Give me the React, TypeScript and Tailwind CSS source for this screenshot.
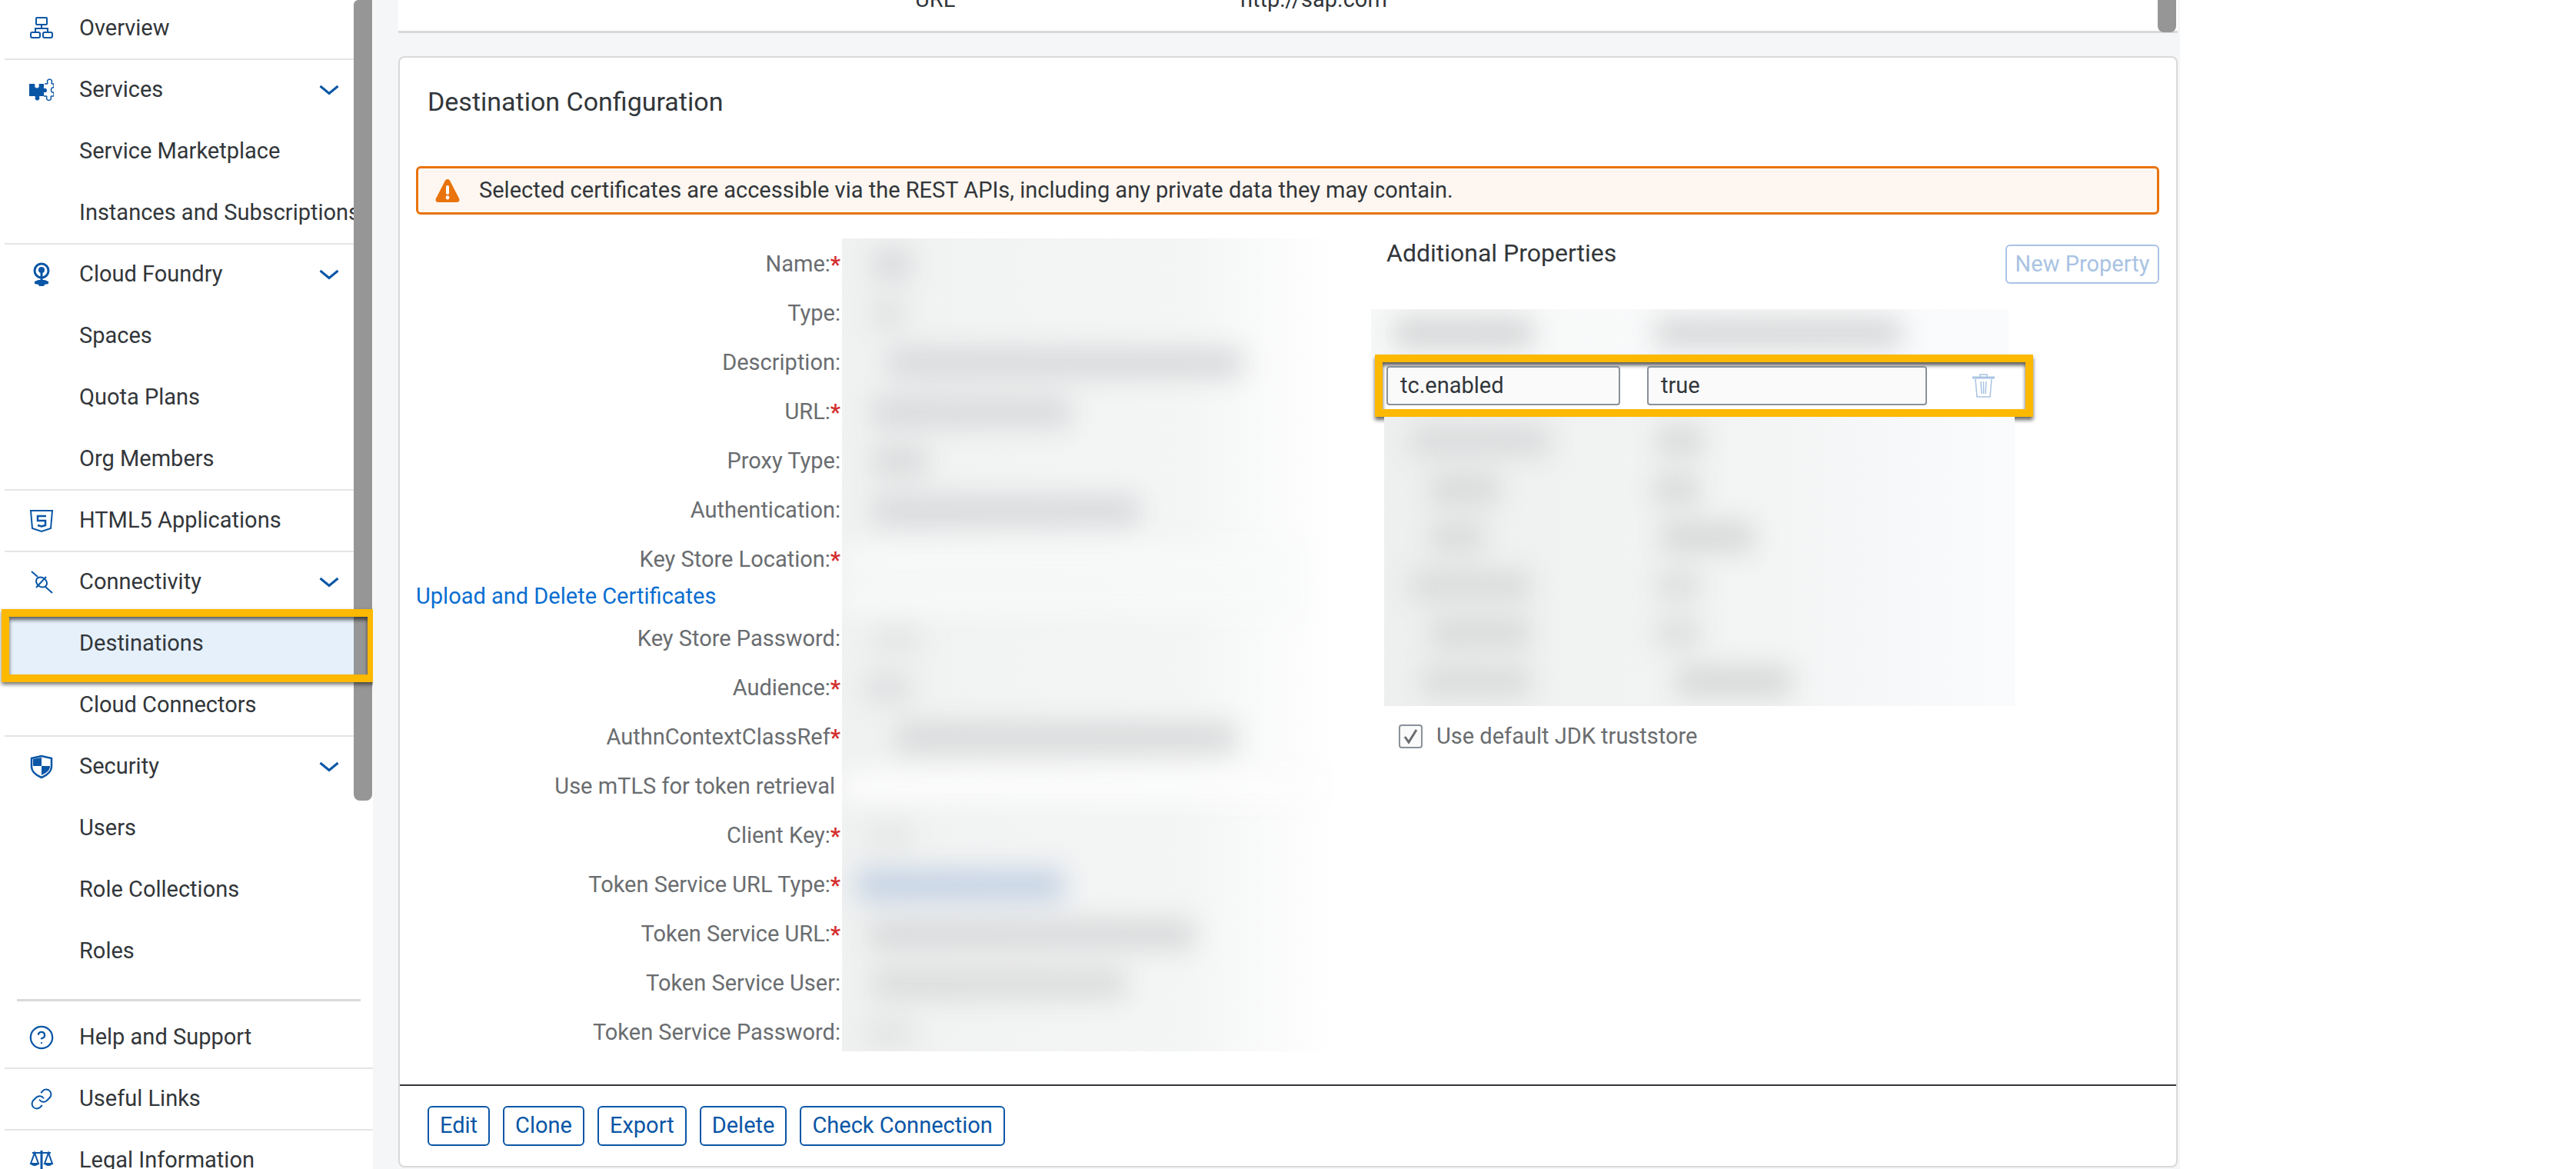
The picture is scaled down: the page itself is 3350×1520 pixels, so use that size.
import { CircleHelp, Link } from "lucide-react";
import type { ReactNode } from "react";

const ICON = "#0a56a6";

function Svg({ children }: { children: ReactNode }) {
  return (
    <svg className="h-[32px] w-[32px] shrink-0" viewBox="0 0 32 32" fill="none" stroke={ICON} strokeWidth="2">
      {children}
    </svg>
  );
}

const icons: Record<string, ReactNode> = {
  overview: (
    <Svg>
      <rect x="9" y="2" width="14" height="9" rx="1" />
      <path d="M16 11v5M8 21v-5h16v5" />
      <rect x="2" y="21" width="12" height="7" rx="2" />
      <rect x="18" y="21" width="12" height="7" rx="2" />
    </Svg>
  ),
  services: (
    <Svg>
      <path fill={ICON} stroke="none" d="M0 8h6.500c1 0 1.200 1 .8 2-.6 2 1 3.500 2.700 3.500S13.300 12 12.700 10c-.4-1-.2-2 .8-2H19v6.200c1.500-1 4-.3 4 2.300s-2.500 3.300-4 2.300V24h-5c-1 0-1.200 1-.8 1.800.8 2-.8 3.700-2.700 3.700s-3.500-1.700-2.700-3.700C8.200 25 8 24 7 24H0z" />
      <path strokeWidth="1.500" d="M20 8h3c1 0 1-1 .7-2-.7-2 .8-4 2.800-4s3.500 2 2.800 4c-.3 1-.3 2 .7 2h2v5c-1.500-1-3.500.5-3.500 3s2 4 3.500 3v5h-3c-1 0-1 1-.7 1.800.7 2-.8 3.700-2.800 3.700s-3.500-1.700-2.800-3.700c.3-.8.300-1.800-.7-1.800h-3" />
    </Svg>
  ),
  cloud: (
    <Svg>
      <circle cx="16" cy="11" r="9" strokeWidth="3" />
      <circle cx="16" cy="10" r="4" fill={ICON} stroke="none" />
      <path strokeWidth="3" d="M16 12v12" />
      <path fill={ICON} stroke="none" d="M7 25l5-2h8l5 2v3l-5 1-1 2h-6l-1-2-5-1z" />
    </Svg>
  ),
  html: (
    <Svg>
      <path d="M2 3h28l-2 23-12 4-12-4z" />
      <path strokeWidth="2.500" d="M22 10H11v6h10v6l-5 1.500L11 22" />
    </Svg>
  ),
  connect: (
    <Svg>
      <path d="M3 2l8 7M21 22l9 8" />
      <ellipse cx="16" cy="16" rx="7.500" ry="6" transform="rotate(38 16 16)" />
      <path d="M9 23L22 9" />
    </Svg>
  ),
  security: (
    <Svg>
      <path strokeWidth="2.500" d="M3 5l13-3 13 3v11c0 7-6 11-13 14C9 27 3 23 3 16z" />
      <path fill={ICON} stroke="none" d="M5 6l11-2v11H5zM16 15h11c0 6-5 9-11 12z" />
    </Svg>
  ),
  help: <CircleHelp size={34} color={ICON} strokeWidth={1.6} className="shrink-0" />,
  links: <Link size={30} color={ICON} strokeWidth={1.6} className="shrink-0" />,
  legal: (
    <Svg>
      <path strokeWidth="3" d="M16 3v28" />
      <path d="M4 6h24M7 6L2 20h10zM25 6l-5 14h10z" />
      <path fill={ICON} stroke="none" d="M2 20h10a5 3 0 0 1-10 0zM20 20h10a5 3 0 0 1-10 0z" />
    </Svg>
  ),
};

function Chevron() {
  return (
    <svg className="ml-auto mr-[19px] shrink-0" width="26" height="14" viewBox="0 0 26 14" fill="none" stroke={ICON} strokeWidth="3">
      <path d="M1.500 2L13 11.500 24.500 2" />
    </svg>
  );
}

function Row({ label, icon, chevron, divider }: { label: string; icon?: string; chevron?: boolean; divider?: boolean }) {
  return (
    <div className={`flex h-[80px] items-center border-b-2 ${divider ? "border-[#e5e5e5]" : "border-transparent"} ${icon ? "pl-[32px]" : "pl-[97px]"}`}>
      {icon && <span className="mr-[33px] flex w-[32px] shrink-0 justify-center">{icons[icon]}</span>}
      <span className="whitespace-nowrap">{label}</span>
      {chevron && <Chevron />}
    </div>
  );
}

function Sidebar() {
  return (
    <aside className="h-[1520px] w-[485px] shrink-0 overflow-hidden bg-white pl-[6px] text-[29px] text-[#32363a]">
      <div className="-mt-[2px] flex">
        <nav className="w-[454px] shrink-0">
          <Row label="Overview" icon="overview" divider />
          <Row label="Services" icon="services" chevron />
          <Row label="Service Marketplace" />
          <Row label="Instances and Subscriptions" divider />
          <Row label="Cloud Foundry" icon="cloud" chevron />
          <Row label="Spaces" />
          <Row label="Quota Plans" />
          <Row label="Org Members" divider />
          <Row label="HTML5 Applications" icon="html" divider />
          <Row label="Connectivity" icon="connect" chevron />
          <div className="relative bg-[#e5f0fa]">
            <Row label="Destinations" />
            <div className="absolute -bottom-[9px] -left-[4px] -right-[28px] -top-[6px] z-10 border-[10px] border-[#fdb800] shadow-[0_3px_5px_rgba(0,0,0,0.55),inset_0_4px_5px_rgba(0,0,0,0.6)]" />
          </div>
          <Row label="Cloud Connectors" divider />
          <Row label="Security" icon="security" chevron />
          <Row label="Users" />
          <Row label="Role Collections" />
          <Row label="Roles" />
        </nav>
        <div className="mt-[2px] h-[1041px] w-[24px] shrink-0 rounded-b-[8px] rounded-tl-[6px] bg-[#969696]" />
      </div>
      <div className="ml-[16px] mr-[16px] mt-[21px] h-[3px] bg-[#d9d9d9]" />
      <div className="mt-[8px]">
        <Row label="Help and Support" icon="help" divider />
        <Row label="Useful Links" icon="links" divider />
        <Row label="Legal Information" icon="legal" />
      </div>
    </aside>
  );
}

type Smudge = { ml: number; w: number; color?: string };

function SmudgeRow({ h, items }: { h: number; items: Smudge[] }) {
  return (
    <div className="flex items-center" style={{ height: h }}>
      {items.map((s, i) => (
        <div key={i} className="h-[38px] shrink-0" style={{ marginLeft: s.ml, width: s.w, backgroundColor: s.color ?? "#d8d9db" }} />
      ))}
    </div>
  );
}

const formRows: { label: string; req?: boolean; h?: number; link?: boolean; pad?: boolean; blur: Smudge[] }[] = [
  { label: "Name:", req: true, blur: [{ ml: 40, w: 50, color: "#d8d9db" }] },
  { label: "Type:", blur: [{ ml: 40, w: 40, color: "#dfe0e1" }] },
  { label: "Description:", blur: [{ ml: 60, w: 460 }] },
  { label: "URL:", req: true, blur: [{ ml: 40, w: 257 }] },
  { label: "Proxy Type:", blur: [{ ml: 40, w: 70, color: "#d9dadb" }] },
  { label: "Authentication:", blur: [{ ml: 40, w: 347 }] },
  { label: "Key Store Location:", req: true, blur: [{ ml: 0, w: 600, color: "#f8f9f9" }] },
  { label: "Upload and Delete Certificates", h: 39, link: true, blur: [{ ml: 0, w: 600, color: "#f8f9f9" }] },
  { label: "Key Store Password:", blur: [{ ml: 40, w: 61, color: "#e4e5e5" }] },
  { label: "Audience:", req: true, blur: [{ ml: 30, w: 60, color: "#dedfe0" }] },
  { label: "AuthnContextClassRef", req: true, blur: [{ ml: 70, w: 442, color: "#d8d9da" }] },
  { label: "Use mTLS for token retrieval", pad: true, blur: [{ ml: 0, w: 640, color: "#fdfdfd" }] },
  { label: "Client Key:", req: true, blur: [{ ml: 35, w: 55, color: "#e6e7e7" }] },
  { label: "Token Service URL Type:", req: true, blur: [{ ml: 20, w: 268, color: "#c2d1e3" }] },
  { label: "Token Service URL:", req: true, blur: [{ ml: 35, w: 423, color: "#d8d9da" }] },
  { label: "Token Service User:", blur: [{ ml: 40, w: 329, color: "#dadbdb" }] },
  { label: "Token Service Password:", blur: [{ ml: 30, w: 63, color: "#e3e4e4" }] },
];

function FormColumn() {
  return (
    <div className="relative flex h-[1057px] w-[1194px] shrink-0 pt-[2px]">
      <div className="w-[554px] shrink-0 text-[#6a6d70]">
        {formRows.map((r) =>
          r.link ? (
            <div key={r.label} className="flex h-[39px] items-center pb-[7px] text-[#0a6ed1]">
              {r.label}
            </div>
          ) : (
            <div key={r.label} className={`flex h-[64px] items-center justify-end whitespace-nowrap ${r.pad ? "pr-[9px]" : "pr-[2px]"}`}>
              {r.label}
              {r.req && <span className="font-bold leading-none text-[#d32f2f]">*</span>}
            </div>
          ),
        )}
      </div>
      <div className="-mt-[2px] h-[1057px] w-[640px] shrink-0 overflow-hidden bg-linear-to-r from-[#f0f1f1] via-[#f4f5f5] via-70% to-white">
        <div className="pt-[2px] blur-[17px]">
          {formRows.map((r) => (
            <SmudgeRow key={r.label} h={r.h ?? 64} items={r.blur} />
          ))}
        </div>
      </div>
    </div>
  );
}

function PropertiesColumn() {
  const header: Smudge[] = [
    { ml: 30, w: 180, color: "#d4d5d6" },
    { ml: 160, w: 320, color: "#d6d7d8" },
  ];
  const rows: Smudge[][] = [
    [{ ml: 35, w: 180, color: "#d9dadb" }, { ml: 140, w: 60, color: "#d8d9d9" }],
    [{ ml: 60, w: 90, color: "#d8d9d9" }, { ml: 200, w: 60, color: "#d8d9d9" }],
    [{ ml: 60, w: 70, color: "#d9dada" }, { ml: 230, w: 120, color: "#d6d7d7" }],
    [{ ml: 35, w: 155, color: "#d9dada" }, { ml: 165, w: 55, color: "#dcdddd" }],
    [{ ml: 60, w: 130, color: "#d8d9d9" }, { ml: 165, w: 55, color: "#dcdddd" }],
    [{ ml: 50, w: 140, color: "#d9dada" }, { ml: 190, w: 150, color: "#d6d7d7" }],
  ];
  return (
    <div className="ml-[48px] w-[1025px] shrink-0">
      <div className="flex h-[92px] items-start justify-between">
        <h3 className="pl-[20px] text-[32px] leading-[38px] text-[#32363a]">Additional Properties</h3>
        <button className="mt-[8px] h-[51px] w-[200px] rounded-[6px] border-2 border-[#a9c3e3] text-[#a9c3e3]">New Property</button>
      </div>
      <div className="h-[59px] w-[829px] overflow-hidden bg-linear-to-r from-[#f7f8f8] to-[#fafbfc]">
        <div className="pt-[2px] blur-[17px]">
          <SmudgeRow h={58} items={header} />
        </div>
      </div>
      <div className="ml-[5px] flex h-[81px] w-[856px] items-center border-[10px] border-[#fdb800] bg-white pl-[5px] shadow-[0_4px_5px_rgba(0,0,0,0.6),inset_0_4px_5px_rgba(0,0,0,0.65)]">
        <div className="flex h-[51px] w-[304px] items-center rounded-[4px] border-2 border-[#89919a] bg-[#fafafa] pl-[16px] text-[#32363a]">tc.enabled</div>
        <div className="ml-[35px] flex h-[51px] w-[364px] items-center rounded-[4px] border-2 border-[#89919a] bg-[#fafafa] pl-[16px] text-[#32363a]">true</div>
        <svg className="ml-[58px] shrink-0" width="31" height="33" viewBox="0 0 31 33" fill="none" stroke="#a9c3e3" strokeWidth="2">
          <path strokeWidth="3" d="M1 6h29" />
          <path d="M11 5V2h9v3M5 8l2 23h17l2-23M12 11l1 16M15.500 11v16M19 11l-1 16" strokeWidth="1.500" />
        </svg>
      </div>
      <div className="ml-[17px] h-[376px] w-[820px] overflow-hidden bg-linear-to-r from-[#eeefef] via-[#f3f4f4] via-60% to-[#fafbfd]">
        <div className="blur-[17px]">
          {rows.map((r, i) => (
            <SmudgeRow key={i} h={62.5} items={r} />
          ))}
        </div>
      </div>
      <div className="ml-[36px] mt-[18px] flex items-center text-[#6a6d70]">
        <span className="flex h-[31px] w-[31px] items-center justify-center rounded-[4px] border-2 border-[#89919a] bg-[#fafafa]">
          <svg width="21" height="21" viewBox="0 0 21 21" fill="none" stroke="#6a6d70" strokeWidth="3">
            <path d="M3 11l5 7L18 2" />
          </svg>
        </span>
        <span className="ml-[18px]">Use default JDK truststore</span>
      </div>
    </div>
  );
}

function Main() {
  return (
    <main className="h-[1520px] w-[2350px] shrink-0 overflow-hidden bg-[#f5f6f7] pl-[33px] text-[29px]">
      <div className="flex h-[43px] w-[2314px] justify-between border-b-[3px] border-[#d9d9d9] bg-white text-[#32363a]">
        <div className="-mt-[19px] flex h-[36px] pl-[672px] leading-[36px]">
          <span className="w-[423px]">URL</span>
          <span>http://sap.com</span>
        </div>
        <div className="mr-[2px] h-[42px] w-[24px] rounded-b-[8px] bg-[#969696]" />
      </div>
      <section className="mt-[30px] h-[1445px] w-[2314px] overflow-hidden rounded-[8px] border-2 border-[#d9d9d9] bg-white">
        <div className="h-[141px] pl-[36px] pt-[38px] text-[34px] leading-[38px] text-[#32363a]">Destination Configuration</div>
        <div className="ml-[21px] flex h-[63px] w-[2267px] items-center rounded-[6px] border-[3px] border-[#e9730c] bg-[#fef7f1] pl-[22px] text-[#32363a]">
          <svg className="mr-[25px] shrink-0" width="32" height="30" viewBox="0 0 32 30">
            <path fill="#e9730c" d="M16 0c1.500 0 2.500.8 3.300 2.300L31 25c1.300 2.600-.1 5-3 5H4c-2.900 0-4.300-2.400-3-5L12.700 2.300C13.500.8 14.500 0 16 0z" />
            <rect x="14" y="8" width="4" height="12" rx="2" fill="#fff" />
            <circle cx="16" cy="24" r="2.400" fill="#fff" />
          </svg>
          Selected certificates are accessible via the REST APIs, including any private data they may contain.
        </div>
        <div className="ml-[21px] mt-[31px] flex">
          <FormColumn />
          <PropertiesColumn />
        </div>
        <div className="mt-[43px] h-[2px] bg-[#32363a]" />
        <div className="ml-[36px] mt-[26px] flex gap-[17px]">
          {["Edit", "Clone", "Export", "Delete", "Check Connection"].map((b) => (
            <button key={b} className="h-[52px] rounded-[6px] border-2 border-[#0a56a6] px-[14px] text-[#0a56a6]">
              {b}
            </button>
          ))}
        </div>
      </section>
    </main>
  );
}

export default function App() {
  return (
    <div className="flex h-[1520px] w-[3350px] overflow-hidden bg-white font-['Roboto',sans-serif]">
      <Sidebar />
      <Main />
    </div>
  );
}
